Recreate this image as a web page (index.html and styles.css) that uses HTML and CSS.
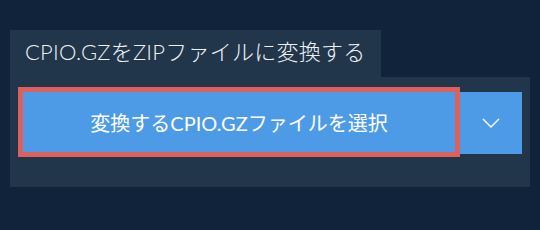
FILE: index.html
```html
<!DOCTYPE html>
<html lang="ja">
<head>
    <meta charset="UTF-8">
    <title>CPIO.GZをZIPファイルに変換する</title>
    <link rel="stylesheet" href="styles.css">
</head>
<body>
    <div class="converter">
        <div class="converter-tab">CPIO.GZをZIPファイルに変換する</div>
        <div class="converter-body">
            <div class="picker">
                <div class="picker-frame">
                    <button class="picker-main">変換するCPIO.GZファイルを選択</button>
                </div>
                <button class="picker-more" aria-label="その他">
                    <svg width="18" height="10" viewBox="0 0 18 10">
                        <path d="M1 1 L9 9 L17 1" fill="none" stroke="#fff" stroke-width="1.4"/>
                    </svg>
                </button>
            </div>
        </div>
    </div>
</body>
</html>
```

FILE: styles.css
```css
:root {
    --bg-color: #10233a;
    --panel-color: #22364b;
    --main-color: #4d9be6;
    --frame-color: #dd605c;
    --text-color: #eef2f6;
}

* {
    box-sizing: border-box;
    margin: 0;
    padding: 0;
}

body {
    background-color: var(--bg-color);
    font-family: Lato, 'Noto Sans CJK JP', sans-serif;
    color: var(--text-color);
}

.converter {
    padding: 30px 10px;
}

.converter-tab {
    display: inline-block;
    width: 371px;
    height: 47px;
    padding: 7px 0 0 15px;
    background-color: var(--panel-color);
    font-size: 22px;
    font-weight: 300;
    line-height: 30px;
    letter-spacing: 0.25px;
}

.converter-body {
    background-color: var(--panel-color);
    padding: 10px 8px 30px;
}

.picker {
    display: flex;
    align-items: flex-start;
}

.picker-frame {
    flex: 1;
    border: 5px solid var(--frame-color);
}

.picker-main,
.picker-more {
    display: flex;
    align-items: center;
    justify-content: center;
    border: none;
    background-color: var(--main-color);
    color: #fff;
    font-family: inherit;
    cursor: pointer;
}

.picker-main {
    width: 100%;
    height: 60px;
    font-size: 20px;
}

.picker-more {
    width: 62px;
    height: 62px;
    margin-top: 5px;
}
```
